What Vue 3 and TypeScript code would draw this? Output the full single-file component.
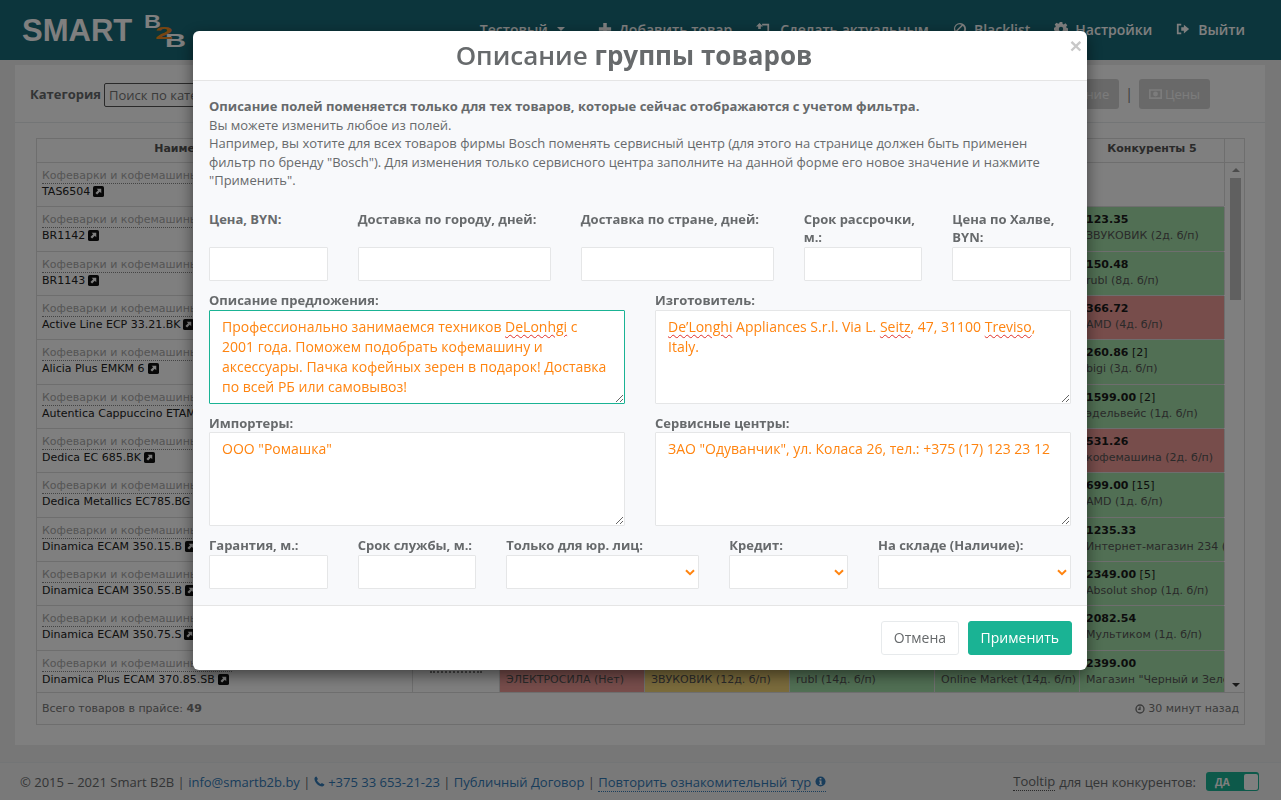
<template>
  <div class="page">
    <header class="topbar">
      <div class="logo">
        <span class="logo-word">SMART</span>
        <svg class="logo-mark" viewBox="0 0 44 36" width="44" height="36">
          <text x="1" y="14" class="mark-b" textLength="17" lengthAdjust="spacingAndGlyphs">B</text>
          <text x="22" y="33" class="mark-b" textLength="21" lengthAdjust="spacingAndGlyphs">B</text>
          <text x="12" y="25" class="mark-2" textLength="18" lengthAdjust="spacingAndGlyphs">2</text>
        </svg>
      </div>
      <nav class="nav">
        <span class="nav-item nav-user">Тестовый <i class="caret"></i></span>
        <span v-for="item in navItems" :key="item.label" class="nav-item">
          <svg class="nav-icon" viewBox="0 0 16 16" width="14" height="14" fill="currentColor"><path :d="item.icon" /></svg>
          {{ item.label }}
        </span>
      </nav>
    </header>

    <main class="content">
      <section class="panel">
        <div class="toolbar">
          <label class="category-label">Категория</label>
          <input class="category-input" placeholder="Поиск по категории" />
          <div class="toolbar-right">
            <button class="tool-btn">Описание</button>
            <span class="tool-sep">|</span>
            <button class="tool-btn">
              <svg viewBox="0 0 16 12" width="13" height="10" fill="currentColor">
                <path fill-rule="evenodd" d="M0 0h16v12H0zM2 2v8h12V2zM8 3a3 3 0 1 1 0 6 3 3 0 0 1 0-6z" />
              </svg>
              Цены
            </button>
          </div>
        </div>

        <div class="table-wrap">
          <div class="table">
            <div class="row row-head">
              <div v-for="head in headers" :key="head" class="cell head-cell">{{ head }}</div>
              <div class="head-corner"></div>
            </div>
            <div class="table-body">
              <div class="rows">
                <div v-for="row in rows" :key="row.name" class="row">
                  <div class="cell name-cell">
                    <span class="cat">Кофеварки и кофемашины</span>
                    <span class="model">
                      {{ row.name }}
                      <svg class="ext" viewBox="0 0 12 12" width="11" height="11">
                        <rect width="12" height="12" rx="2" fill="#111" />
                        <path d="M4 3h5v5L7.400 6.400 4.500 9.300 2.700 7.500 5.600 4.600z" fill="#fff" />
                      </svg>
                    </span>
                  </div>
                  <div class="cell"><span class="dotted"></span></div>
                  <div v-for="(offer, i) in row.offers" :key="i" class="cell offer" :class="offer.tone">
                    <b v-if="offer.price">{{ offer.price }}<span v-if="offer.count" class="count"> [{{ offer.count }}]</span></b>
                    <span class="seller">{{ offer.seller }}</span>
                  </div>
                </div>
              </div>
              <div class="scrollbar">
                <i class="arrow arrow-up"></i>
                <div class="thumb"></div>
                <i class="arrow arrow-down"></i>
              </div>
            </div>
            <div class="table-foot">
              <span>Всего товаров в прайсе: <b>49</b></span>
              <span class="updated">
                <svg viewBox="0 0 12 12" width="10" height="10" fill="none" stroke="currentColor" stroke-width="1.600">
                  <circle cx="6" cy="6" r="4.800" />
                  <path d="M6 3v3.300H3.800" />
                </svg>
                30 минут назад
              </span>
            </div>
          </div>
        </div>
      </section>
    </main>

    <footer class="footer">
      <div class="footer-left">
        © 2015 – 2021 Smart B2B |
        <a>info@smartb2b.by</a> |
        <a>
          <svg viewBox="0 0 12 12" width="11" height="11" fill="currentColor">
            <path d="M2.600.6 4.300 3.400 3.200 4.700C3.800 6.200 5.500 8 7.300 8.800L8.600 7.700 11.400 9.400C11.200 10.500 10.200 11.500 9 11.500 4.800 11.300.7 7.200.5 3 .5 1.800 1.500.8 2.600.6z" />
          </svg>
          +375 33 653-21-23
        </a> |
        <a>Публичный Договор</a> |
        <a class="tour">Повторить ознакомительный тур
          <svg viewBox="0 0 12 12" width="11" height="11">
            <circle cx="6" cy="6" r="5.500" fill="currentColor" />
            <path d="M5 2.300h2v1.600H5zM4.600 5h2.500v3.600h.7v1H4.400v-1h.8V6h-.6z" fill="#fff" />
          </svg>
        </a>
      </div>
      <div class="footer-right">
        <span class="tip-word">Tooltip</span> для цен конкурентов:
        <span class="toggle"><b>ДА</b><i></i></span>
      </div>
    </footer>

    <div class="backdrop">
      <div class="modal">
        <div class="modal-head">
          <h2>Описание <b>группы товаров</b></h2>
          <button class="close">×</button>
        </div>
        <div class="modal-body">
          <p class="intro">
            <b>Описание полей поменяется только для тех товаров, которые сейчас отображаются с учетом фильтра.</b><br />
            Вы можете изменить любое из полей.<br />
            Например, вы хотите для всех товаров фирмы Bosch поменять сервисный центр (для этого на странице должен быть применен
            фильтр по бренду "Bosch"). Для изменения только сервисного центра заполните на данной форме его новое значение и нажмите
            "Применить".
          </p>

          <div class="form-grid">
            <div class="field span-2"><label>Цена, BYN:</label><input /></div>
            <div class="field span-3"><label>Доставка по городу, дней:</label><input /></div>
            <div class="field span-3"><label>Доставка по стране, дней:</label><input /></div>
            <div class="field span-2"><label>Срок рассрочки, м.:</label><input /></div>
            <div class="field span-2"><label>Цена по Халве, BYN:</label><input /></div>
          </div>

          <div class="form-grid">
            <div class="field span-6">
              <label>Описание предложения:</label>
              <div class="area focused">Профессионально занимаемся техников <u>DeLonhgi</u> с 2001 года. Поможем подобрать кофемашину и аксессуары. Пачка кофейных зерен в подарок! Доставка по всей РБ или самовывоз!</div>
            </div>
            <div class="field span-6">
              <label>Изготовитель:</label>
              <div class="area"><u>De’Longhi</u> Appliances S.r.l. Via L. <u>Seitz</u>, 47, 31100 <u>Treviso</u>, Italy.</div>
            </div>
            <div class="field span-6">
              <label>Импортеры:</label>
              <div class="area">ООО "Ромашка"</div>
            </div>
            <div class="field span-6">
              <label>Сервисные центры:</label>
              <div class="area">ЗАО "Одуванчик", ул. Коласа 26, тел.: +375 (17) 123 23 12</div>
            </div>
          </div>

          <div class="form-grid last">
            <div class="field span-2"><label>Гарантия, м.:</label><input /></div>
            <div class="field span-2"><label>Срок службы, м.:</label><input /></div>
            <div v-for="sel in selects" :key="sel.label" class="field" :class="sel.span">
              <label>{{ sel.label }}</label>
              <div class="select-wrap">
                <select></select>
                <svg viewBox="0 0 10 7" width="10" height="7" fill="none" stroke="#ff8410" stroke-width="2">
                  <path d="M1 1.200 5 5.200 9 1.200" />
                </svg>
              </div>
            </div>
          </div>
        </div>
        <div class="modal-foot">
          <button class="btn btn-cancel">Отмена</button>
          <button class="btn btn-apply">Применить</button>
        </div>
      </div>
    </div>
  </div>
</template>

<script setup lang="ts">
type Tone = 'none' | 'green' | 'red' | 'yellow'

interface Offer {
  price?: string
  count?: number
  seller: string
  tone: Tone
}

interface Row {
  name: string
  offers: Offer[]
}

const headers = ['Наименование товара', 'Цена', 'Конкуренты 1', 'Конкуренты 2', 'Конкуренты 3', 'Конкуренты 4', 'Конкуренты 5']

const navItems = [
  { label: 'Добавить товар', icon: 'M6 1h4v5h5v4h-5v5H6v-5H1V6h5z' },
  { label: 'Сделать актуальным', icon: 'M4 1 8 5H5.500v3H2.500V5H0zM7 2h8v11H6v-2h7V4H7z' },
  { label: 'Blacklist', icon: 'M8 1a7 7 0 1 1 0 14A7 7 0 0 1 8 1zm3.300 3.200-7.100 7.100a5 5 0 0 0 7.100-7.100zM4.700 11.800zM3.200 10l6.800-6.800A5 5 0 0 0 3.200 10z' },
  { label: 'Настройки', icon: 'M6.500 0h3l.4 2.200 1.300.6 1.900-1.300 2.100 2.100-1.300 1.900.6 1.300 2.200.4v3l-2.200.4-.6 1.300 1.300 1.900-2.100 2.100-1.900-1.300-1.300.6-.4 2.200h-3l-.4-2.200-1.300-.6-1.900 1.300L.8 13.600l1.300-1.900-.6-1.300L0 9.500v-3l1.500-.4.6-1.300L.8 2.900l2.100-2.100 1.900 1.300 1.300-.6zM8 5.500a2.500 2.500 0 1 0 0 5 2.500 2.500 0 0 0 0-5z' },
  { label: 'Выйти', icon: 'M6 2v2H3v8h3v2H1V2zM9 3l6 5-6 5v-3H6V6h3z' },
]

const selects = [
  { label: 'Только для юр. лиц:', span: 'span-3' },
  { label: 'Кредит:', span: 'span-2' },
  { label: 'На складе (Наличие):', span: 'span-3' },
]

// первые четыре колонки закрыты окном, видно только пятую
const blank = (): Offer[] => [
  { seller: '', tone: 'none' },
  { seller: '', tone: 'none' },
  { seller: '', tone: 'none' },
  { seller: '', tone: 'none' },
]

const rows: Row[] = [
  { name: 'TAS6504', offers: [...blank(), { seller: '', tone: 'none' }] },
  { name: 'BR1142', offers: [...blank(), { price: '123.35', seller: 'ЗВУКОВИК (2д. б/п)', tone: 'green' }] },
  { name: 'BR1143', offers: [...blank(), { price: '150.48', seller: 'rubl (8д. б/п)', tone: 'green' }] },
  { name: 'Active Line ECP 33.21.BK', offers: [...blank(), { price: '366.72', seller: 'AMD (4д. б/п)', tone: 'red' }] },
  { name: 'Alicia Plus EMKM 6', offers: [...blank(), { price: '260.86', count: 2, seller: 'bigi (3д. б/п)', tone: 'green' }] },
  { name: 'Autentica Cappuccino ETAM', offers: [...blank(), { price: '1599.00', count: 2, seller: 'эдельвейс (1д. б/п)', tone: 'green' }] },
  { name: 'Dedica EC 685.BK', offers: [...blank(), { price: '531.26', seller: 'кофемашина (2д. б/п)', tone: 'red' }] },
  { name: 'Dedica Metallics EC785.BG', offers: [...blank(), { price: '699.00', count: 15, seller: 'AMD (1д. б/п)', tone: 'green' }] },
  { name: 'Dinamica ECAM 350.15.B', offers: [...blank(), { price: '1235.33', seller: 'Интернет-магазин 234 (1д. б/п)', tone: 'green' }] },
  { name: 'Dinamica ECAM 350.55.B', offers: [...blank(), { price: '2349.00', count: 5, seller: 'Absolut shop (1д. б/п)', tone: 'green' }] },
  { name: 'Dinamica ECAM 350.75.S', offers: [...blank(), { price: '2082.54', seller: 'Мультиком (1д. б/п)', tone: 'green' }] },
  {
    name: 'Dinamica Plus ECAM 370.85.SB',
    offers: [
      { price: '2415.00', seller: 'ЭЛЕКТРОСИЛА (Нет)', tone: 'red' },
      { price: '2410.00', seller: 'ЗВУКОВИК (12д. б/п)', tone: 'yellow' },
      { price: '2405.00', seller: 'rubl (14д. б/п)', tone: 'green' },
      { price: '2400.00', seller: 'Online Market (14д. б/п)', tone: 'green' },
      { price: '2399.00', seller: 'Магазин "Черный и Зеленый"', tone: 'green' },
    ],
  },
]
</script>

<style>
html,
body {
  height: 100%;
  margin: 0;
  overflow: hidden;
}
</style>

<style scoped>
.page {
  display: flex;
  flex-direction: column;
  height: 800px;
  background: #eeeeee;
  font-family: 'Open Sans', 'Noto Sans', sans-serif;
  font-size: 14px;
  color: #676a6c;
}

/* шапка */
.topbar {
  display: flex;
  align-items: center;
  height: 60px;
  flex: none;
  padding: 0 36px 0 22px;
  background: #186a78;
  color: #fff;
  box-sizing: border-box;
}
.logo {
  display: flex;
  align-items: flex-start;
}
.logo-word {
  font-family: 'Liberation Sans', Arial, sans-serif;
  font-size: 31px;
  font-weight: 700;
  line-height: 61px;
}
.logo-mark {
  margin: 14px 0 0 11px;
}
.mark-b,
.mark-2 {
  font-family: 'Liberation Sans', Arial, sans-serif;
  font-weight: 700;
}
.mark-b {
  font-size: 19px;
  fill: #fff;
}
.mark-2 {
  font-size: 16px;
  fill: #f08a24;
}
.nav {
  display: flex;
  align-items: center;
  margin-left: auto;
  padding-bottom: 2px;
  gap: 24px;
  font-weight: 600;
}
.nav-item {
  display: flex;
  align-items: center;
  gap: 7px;
  white-space: nowrap;
}
.nav-item:nth-child(3) {
  gap: 10px;
}
.nav-item:last-child {
  gap: 8px;
}
.nav-user {
  margin-right: 9px;
}
.nav-icon {
  flex: none;
}
.caret {
  width: 0;
  height: 0;
  margin-left: 2px;
  border: 4px solid transparent;
  border-top-color: #fff;
  border-bottom: 0;
}

/* основная панель */
.content {
  flex: 1;
  padding: 5px 16px 17px 15px;
  min-height: 0;
}
.panel {
  display: flex;
  flex-direction: column;
  height: 100%;
  background: #fff;
}
.toolbar {
  display: flex;
  align-items: center;
  height: 58px;
  flex: none;
  padding: 0 55px 0 15px;
  border-bottom: 1px solid #e7eaec;
  box-sizing: border-box;
}
.category-label {
  font-size: 13px;
  font-weight: 700;
  margin-right: 3px;
}
.category-input {
  width: 200px;
  height: 24px;
  margin-top: 2px;
  padding: 0 4px;
  border: 1px solid #555;
  border-radius: 2px;
  box-sizing: border-box;
  font: 13px 'Open Sans', sans-serif;
}
.toolbar-right {
  display: flex;
  align-items: center;
  gap: 6px;
  margin-left: auto;
}
.tool-btn {
  display: flex;
  align-items: center;
  gap: 3px;
  height: 30px;
  padding: 0 10px;
  border: 0;
  border-radius: 3px;
  background: #d3d3d3;
  color: #f8f8f8;
  font: 13px 'Open Sans', sans-serif;
}
.tool-sep {
  color: #777;
}

/* таблица */
.table-wrap {
  flex: 1;
  min-height: 0;
  padding: 15px 20px 20px 21px;
}
.table {
  display: flex;
  flex-direction: column;
  height: 100%;
  border: 1px solid #dddddd;
  box-sizing: border-box;
  font-family: 'DejaVu Sans', Verdana, sans-serif;
  font-size: 11px;
  color: #676a6c;
}
.row {
  display: grid;
  grid-template-columns: 376px 87px 145px 145px 145px 145px 145px;
  height: 44.33px;
  border-bottom: 1px solid #dddddd;
  box-sizing: border-box;
}
.row-head {
  flex: none;
  height: 24px;
  grid-template-columns: 376px 87px 145px 145px 145px 145px 145px 20px;
  font-weight: 700;
  color: #555;
}
.cell {
  min-width: 0;
  padding: 5px 5px;
  overflow: hidden;
  white-space: nowrap;
  border-right: 1px solid #dddddd;
  box-sizing: border-box;
}
.head-cell {
  padding: 0;
  text-align: center;
  line-height: 20px;
}
.table-body {
  display: flex;
  flex: 1;
  min-height: 0;
  overflow: hidden;
}
.rows {
  flex: 1;
  min-width: 0;
}
.name-cell {
  padding: 6px 5px 0;
}
.cat {
  display: block;
  width: 190px;
  color: #aaa;
  line-height: 14px;
  border-bottom: 1px dotted #888;
  white-space: nowrap;
  overflow: hidden;
}
.model {
  display: flex;
  align-items: center;
  gap: 3px;
  line-height: 15px;
  color: #222;
}
.ext {
  flex: none;
}
.dotted {
  display: block;
  width: 52px;
  margin: 15px auto 0;
  border-bottom: 2px dotted #888;
}
.offer b {
  display: block;
  line-height: 15px;
  color: #1a1a1a;
}
.count {
  font-weight: 400;
}
.seller {
  display: block;
  line-height: 17px;
  color: #555;
}
.offer.none {
  background: #fff;
}
.green {
  background: #a2dfa8;
  padding-left: 6px;
}
.red {
  background: #ee9a96;
  padding-left: 6px;
}
.yellow {
  background: #f5d678;
  padding-left: 6px;
}
.scrollbar {
  display: flex;
  flex-direction: column;
  align-items: center;
  width: 20px;
  flex: none;
  padding: 5px 0 5px 3px;
  box-sizing: border-box;
}
.arrow {
  width: 0;
  height: 0;
  border: 4px solid transparent;
}
.arrow-up {
  border-top: 0;
  border-bottom-color: #999;
}
.arrow-down {
  margin-top: auto;
  border-bottom: 0;
  border-top-color: #333;
}
.thumb {
  width: 11px;
  height: 122px;
  margin-top: 6px;
  background: #c0c0c0;
}
.table-foot {
  display: flex;
  justify-content: space-between;
  align-items: center;
  flex: none;
  height: 32px;
  padding: 0 5px;
  border-top: 1px solid #dddddd;
  box-sizing: border-box;
  color: #777;
}
.updated {
  display: flex;
  align-items: center;
  gap: 3px;
}

/* подвал */
.footer {
  display: flex;
  justify-content: space-between;
  align-items: center;
  height: 38px;
  flex: none;
  padding: 0 22px 0 20px;
  border-top: 1px solid #e7eaec;
  box-sizing: border-box;
  background: #f3f3f3;
  font-size: 13px;
  white-space: nowrap;
}
.footer a {
  color: #337ab7;
}
.tour {
  border-bottom: 1px dotted #337ab7;
}
.tip-word {
  border-bottom: 1px dotted #555;
}
.footer-right {
  display: flex;
  align-items: center;
  gap: 4px;
}
.toggle {
  display: flex;
  align-items: center;
  justify-content: space-between;
  width: 53px;
  height: 19px;
  margin-left: 6px;
  padding: 0 1px 0 9px;
  border-radius: 3px;
  background: #1ab394;
  box-sizing: border-box;
  color: #fff;
  font-size: 10px;
}
.toggle i {
  width: 14px;
  height: 16px;
  border-radius: 2px;
  background: #fff;
}

/* модальное окно */
.backdrop {
  position: fixed;
  inset: 0;
  background: rgba(0, 0, 0, 0.5);
}
.modal {
  width: 894px;
  margin: 31px 0 0 193px;
  border-radius: 6px;
  background: #fff;
  box-shadow: 0 5px 15px rgba(0, 0, 0, 0.5);
  overflow: hidden;
}
.modal-head {
  position: relative;
  height: 50px;
  padding-right: 12px;
  border-bottom: 1px solid #e5e5e5;
  box-sizing: border-box;
  text-align: center;
}
.modal-head h2 {
  margin: 0;
  font-size: 26px;
  font-weight: 600;
  line-height: 48px;
}
.modal-head b {
  font-weight: 700;
}
.close {
  position: absolute;
  top: 3px;
  right: 5px;
  padding: 0;
  border: 0;
  background: none;
  color: #c8c8c8;
  font: 700 21px 'Liberation Sans', Arial, sans-serif;
}
.modal-body {
  padding: 16px 16px 16px;
  background: #f8f9fb;
  border-bottom: 1px solid #e5e5e5;
  font-size: 13px;
  line-height: 18.57px;
}
.intro {
  margin: 0 0 20px;
}
.form-grid {
  display: grid;
  grid-template-columns: repeat(12, 1fr);
  column-gap: 30px;
}
.span-2 {
  grid-column: span 2;
}
.span-3 {
  grid-column: span 3;
}
.span-6 {
  grid-column: span 6;
}
.field {
  display: flex;
  flex-direction: column;
  margin-bottom: 10px;
}
.last .field {
  margin-bottom: 0;
}
.field label {
  display: block;
  margin-bottom: auto;
  font-weight: 700;
}
.field input,
.field select {
  display: block;
  width: 100%;
  height: 34px;
  border: 1px solid #e5e6e7;
  border-radius: 1px;
  background: #fff;
  box-sizing: border-box;
  appearance: none;
}
.area {
  height: 94px;
  padding: 6px 12px;
  border: 1px solid #e5e6e7;
  border-radius: 1px;
  background: #fff;
  box-sizing: border-box;
  color: #ff8410;
  font-size: 14px;
  line-height: 20px;
  overflow: auto;
  resize: vertical;
}
.area.focused {
  border-color: #1ab394;
}
.area u {
  text-decoration: underline wavy #e0302a 1px;
  text-underline-offset: 2px;
}
.select-wrap {
  position: relative;
}
.select-wrap svg {
  position: absolute;
  top: 14px;
  right: 4px;
}
.modal-foot {
  display: flex;
  justify-content: flex-end;
  gap: 9px;
  padding: 15px 15px 15px;
}
.btn {
  height: 34px;
  padding: 0 12px;
  border-radius: 3px;
  font: 14px 'Open Sans', sans-serif;
}
.btn-cancel {
  padding: 0 11.5px;
  border: 1px solid #e7eaec;
  background: #fff;
  color: #676a6c;
}
.btn-apply {
  border: 1px solid #1ab394;
  background: #1ab394;
  color: #fff;
}
</style>
